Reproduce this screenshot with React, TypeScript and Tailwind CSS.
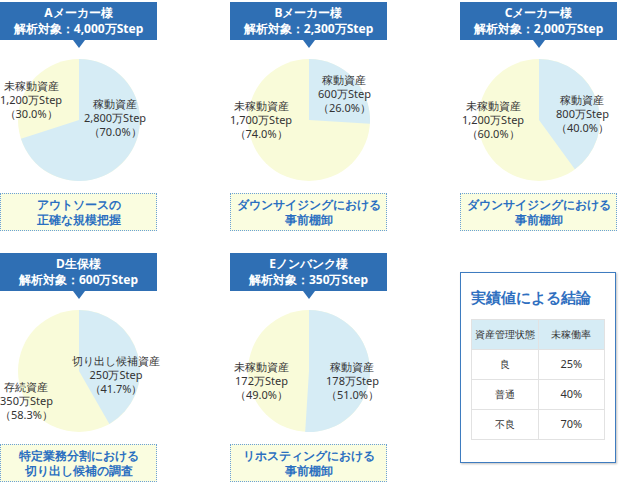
import React from 'react';

type Chart = {
  name: string;
  total: string;
  blue: number;
  blueLabel: string[];
  yellowLabel: string[];
  bluePos: string;
  yellowPos: string;
  note: string[];
};

const charts: Chart[] = [
  { name: 'Aメーカー様', total: '4,000万Step', blue: 70, blueLabel: ['稼動資産', '2,800万Step', '（70.0%）'], yellowLabel: ['未稼動資産', '1,200万Step', '（30.0%）'], bluePos: 'left-[84px] top-[38px]', yellowPos: 'left-[0px] top-[20px]', note: ['アウトソースの', '正確な規模把握'] },
  { name: 'Bメーカー様', total: '2,300万Step', blue: 26, blueLabel: ['稼動資産', '600万Step', '（26.0%）'], yellowLabel: ['未稼動資産', '1,700万Step', '（74.0%）'], bluePos: 'left-[88px] top-[14px]', yellowPos: 'left-[0px] top-[40px]', note: ['ダウンサイジングにおける', '事前棚卸'] },
  { name: 'Cメーカー様', total: '2,000万Step', blue: 40, blueLabel: ['稼動資産', '800万Step', '（40.0%）'], yellowLabel: ['未稼動資産', '1,200万Step', '（60.0%）'], bluePos: 'left-[96px] top-[34px]', yellowPos: 'left-[2px] top-[40px]', note: ['ダウンサイジングにおける', '事前棚卸'] },
  { name: 'D生保様', total: '600万Step', blue: 41.7, blueLabel: ['切り出し候補資産', '250万Step', '（41.7%）'], yellowLabel: ['存続資産', '350万Step', '（58.3%）'], bluePos: 'left-[72px] top-[44px]', yellowPos: 'left-[0px] top-[70px]', note: ['特定業務分割における', '切り出し候補の調査'] },
  { name: 'Eノンバンク様', total: '350万Step', blue: 51, blueLabel: ['稼動資産', '178万Step', '（51.0%）'], yellowLabel: ['未稼動資産', '172万Step', '（49.0%）'], bluePos: 'left-[96px] top-[50px]', yellowPos: 'left-[4px] top-[50px]', note: ['リホスティングにおける', '事前棚卸'] },
];

function Pie({ pct }: { pct: number }) {
  const r = 61;
  const a = (pct / 100) * 2 * Math.PI;
  const x = 61 + r * Math.sin(a);
  const y = 61 - r * Math.cos(a);
  const large = pct > 50 ? 1 : 0;
  return (
    <svg width="122" height="122" viewBox="0 0 122 122">
      <circle cx="61" cy="61" r={r} fill="#f9fbd9" />
      <path d={`M61 61 L61 0 A${r} ${r} 0 ${large} 1 ${x} ${y} Z`} fill="#d6ecf5" />
    </svg>
  );
}

function Card({ c }: { c: Chart }) {
  return (
    <div className="w-[157px] flex flex-col items-center">
      <div className="relative w-full bg-[#2f6fb4] text-white text-[12px] leading-[16px] font-bold text-center py-[3px]">
        <div>{c.name}</div>
        <div>解析対象：{c.total}</div>
        <div className="absolute left-1/2 -translate-x-1/2 top-full w-0 h-0 border-l-[6px] border-r-[6px] border-t-[8px] border-l-transparent border-r-transparent border-t-[#2f6fb4]" />
      </div>
      <div className="relative w-full h-[122px] mt-[19px] flex justify-center">
        <Pie pct={c.blue} />
        <div className={`absolute ${c.yellowPos} whitespace-nowrap text-[11px] leading-[14px] text-[#333] text-center`}>
          {c.yellowLabel.map((l) => <div key={l}>{l}</div>)}
        </div>
        <div className={`absolute ${c.bluePos} whitespace-nowrap text-[11px] leading-[14px] text-[#333] text-center`}>
          {c.blueLabel.map((l) => <div key={l}>{l}</div>)}
        </div>
      </div>
      <div className="w-full mt-[12px] h-[38px] border border-dotted border-[#6aa0d8] bg-[#fafde0] text-[#2a6fc0] text-[11.5px] leading-[15px] font-bold flex flex-col items-center justify-center whitespace-nowrap">
        {c.note.map((l) => <div key={l}>{l}</div>)}
      </div>
    </div>
  );
}

export default function App() {
  const rows = [['良', '25%'], ['普通', '40%'], ['不良', '70%']];
  return (
    <div className="w-[620px] h-[483px] bg-white pt-[2px] font-[Arial,'Liberation_Sans','Noto_Sans_CJK_JP',sans-serif]">
      <div className="flex gap-[73px]">
        {charts.slice(0, 3).map((c) => <Card key={c.name} c={c} />)}
      </div>
      <div className="flex gap-[73px] mt-[22px]">
        {charts.slice(3).map((c) => <Card key={c.name} c={c} />)}
        <div className="mt-[19px] w-[156px] h-[191px] border border-[#3e7cc0] shadow-[1px_1px_2px_rgba(0,0,0,0.25)] px-[10px] pt-[14px]">
          <div className="text-[#2f6fc0] text-[15px] font-bold leading-[20px]">実績値による結論</div>
          <table className="mt-[12px] w-full border-collapse text-[10px] text-[#333]">
            <thead>
              <tr className="bg-[#d6ecf5] h-[30px]">
                <th className="border border-[#e2e2e2] font-normal w-1/2">資産管理状態</th>
                <th className="border border-[#e2e2e2] font-normal">未稼働率</th>
              </tr>
            </thead>
            <tbody>
              {rows.map(([a, b]) => (
                <tr key={a} className="h-[30px] text-center">
                  <td className="border border-[#e2e2e2]">{a}</td>
                  <td className="border border-[#e2e2e2] text-[11px]">{b}</td>
                </tr>
              ))}
            </tbody>
          </table>
        </div>
      </div>
    </div>
  );
}
